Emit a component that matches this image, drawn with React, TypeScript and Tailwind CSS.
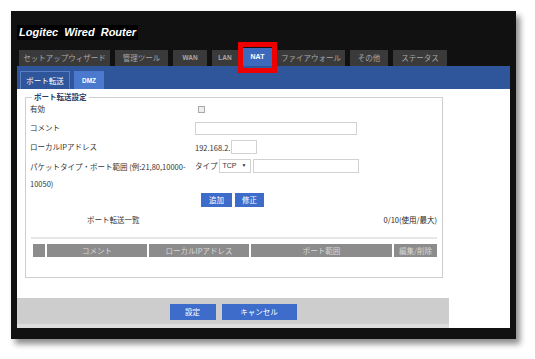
const tabs = [
  { label: 'セットアップウィザード', w: 'w-[91px]' },
  { label: '管理ツール', w: 'w-[53px]' },
  { label: 'WAN', w: 'w-[34px]', latin: true },
  { label: 'LAN', w: 'w-[26px]', latin: true },
  { label: 'NAT', w: 'w-[29px]', latin: true, active: true },
  { label: 'ファイアウォール', w: 'w-[68px]' },
  { label: 'その他', w: 'w-[38px]' },
  { label: 'ステータス', w: 'w-[54px]' },
];

const columns = [
  { label: '', w: 'w-[12px]' },
  { label: 'コメント', w: 'w-[100px]' },
  { label: 'ローカルIPアドレス', w: 'w-[100px]' },
  { label: 'ポート範囲', w: 'w-[141px]' },
  { label: '編集/削除', w: 'w-[43px]' },
];

export default function App() {
  return (
    <div className="w-[535px] h-[359px] bg-white font-['Noto_Sans_CJK_JP',sans-serif] text-[7.5px] text-[#333] pt-[11px] pl-[11px]">
      <div className="w-[505px] bg-[#111] px-[6px] pb-[11px] shadow-[4px_5px_6px_rgba(0,0,0,0.45)]">

        {/* Title */}
        <div className="pt-[14px]">
          <span className="inline-block h-[15px] bg-black px-[2px] leading-[15px] font-['Liberation_Sans',sans-serif] text-[11px] font-bold italic text-white [word-spacing:3px]">
            Logitec Wired Router
          </span>
        </div>

        {/* Main tabs */}
        <div className="mt-[8px] ml-[2px] flex h-[18px] items-end gap-[5px]">
          {tabs.map((t) => (
            <div key={t.label} className={`relative ${t.w}`}>
              <div
                className={
                  t.active
                    ? 'flex h-[18px] items-center justify-center bg-[#3d69bd] text-[7px] font-bold text-white font-["Liberation_Sans",sans-serif]'
                    : `flex h-[16px] items-center justify-center bg-[#3a3a3a] text-[#a8a8a8] ${t.latin ? 'text-[6.5px] font-bold font-["Liberation_Sans",sans-serif]' : ''}`
                }
              >
                {t.label}
              </div>
              {t.active && (
                <div className="absolute -left-[5px] -top-[6px] -right-[5px] -bottom-[7px] border-[5px] border-[#ee0000]" />
              )}
            </div>
          ))}
        </div>

        {/* Sub tabs */}
        <div className="flex h-[23px] items-end gap-[4px] bg-[#2f559b] pl-[3px]">
          <div className="flex h-[18px] w-[50px] items-center justify-center border border-b-0 border-[#5a7ec6] text-white">
            ポート転送
          </div>
          <div className="flex h-[18px] w-[30px] items-end justify-center bg-[#4a79cd] pb-[3px] font-['Liberation_Sans',sans-serif] text-[6.5px] font-bold text-white">
            DMZ
          </div>
        </div>

        {/* Content */}
        <div className="bg-white pt-[3px]">
          <fieldset className="ml-[8px] w-[417px] border border-[#cfcfcf] pl-[4px] pr-[5px] pb-[20px]">
            <legend className="ml-[2px] px-[2px] leading-[10px] font-bold text-[#2a3a66]">ポート転送設定</legend>

            <div className="flex h-[14px] items-center">
              <span className="w-[165px]">有効</span>
              <span className="ml-[3px] h-[7px] w-[7px] border border-[#aaa] bg-[#eee]" />
            </div>

            <div className="flex h-[24px] items-center">
              <span className="w-[165px]">コメント</span>
              <span className="h-[13px] w-[162px] border border-[#d2d2d2]" />
            </div>

            <div className="flex h-[14px] items-center">
              <span className="w-[165px]">ローカルIPアドレス</span>
              <span className="pt-[2px]">192.168.2.</span>
              <span className="ml-[1px] h-[14px] w-[26px] border border-[#d2d2d2]" />
            </div>

            <div className="flex pt-[4px]">
              <span className="w-[165px] leading-[17px] whitespace-nowrap">
                パケットタイプ・ポート範囲 (例:21,80,10000-
                <br />
                10050)
              </span>
              <div className="mt-[1px] flex h-[14px] items-center">
                <span>タイプ</span>
                <span className="ml-[1px] flex h-[14px] w-[32px] items-center justify-between border border-[#d2d2d2] px-[3px] font-['Liberation_Sans',sans-serif] text-[7px]">
                  TCP <span className="text-[5px]">▼</span>
                </span>
                <span className="ml-[2px] h-[14px] w-[106px] border border-[#d2d2d2]" />
              </div>
            </div>

            <div className="mt-[1px] flex h-[14px] gap-[3px] pl-[171px]">
              <span className="flex w-[31px] items-center justify-center bg-[#3d6ccb] text-white">追加</span>
              <span className="flex w-[29px] items-center justify-center bg-[#3d6ccb] text-white">修正</span>
            </div>

            <div className="mt-[6px] flex h-[14px] items-center justify-between">
              <span className="ml-[57px]">ポート転送一覧</span>
              <span className="text-[#222]">0/10(使用/最大)</span>
            </div>

            <div className="mt-[10px] ml-[1px] h-[2px] bg-[#e6e6e6]" />

            <div className="mt-[5px] ml-[3px] flex h-[13px] gap-[2px]">
              {columns.map((c, i) => (
                <span key={i} className={`${c.w} flex items-center justify-center bg-[#8c8c8c] text-[#d8d8d8]`}>
                  {c.label}
                </span>
              ))}
            </div>
          </fieldset>

          {/* Footer */}
          <div className="mt-[20px] flex h-[30px] w-[432px] items-center justify-center gap-[6px] border-b-[4px] border-[#dcdcdc] bg-[#cdcdcd] pt-[2px]">
            <span className="flex h-[16px] w-[46px] items-center justify-center bg-[#3d6ccb] text-white">設定</span>
            <span className="flex h-[16px] w-[75px] items-center justify-center bg-[#3d6ccb] text-white">キャンセル</span>
          </div>
        </div>
      </div>
    </div>
  );
}
